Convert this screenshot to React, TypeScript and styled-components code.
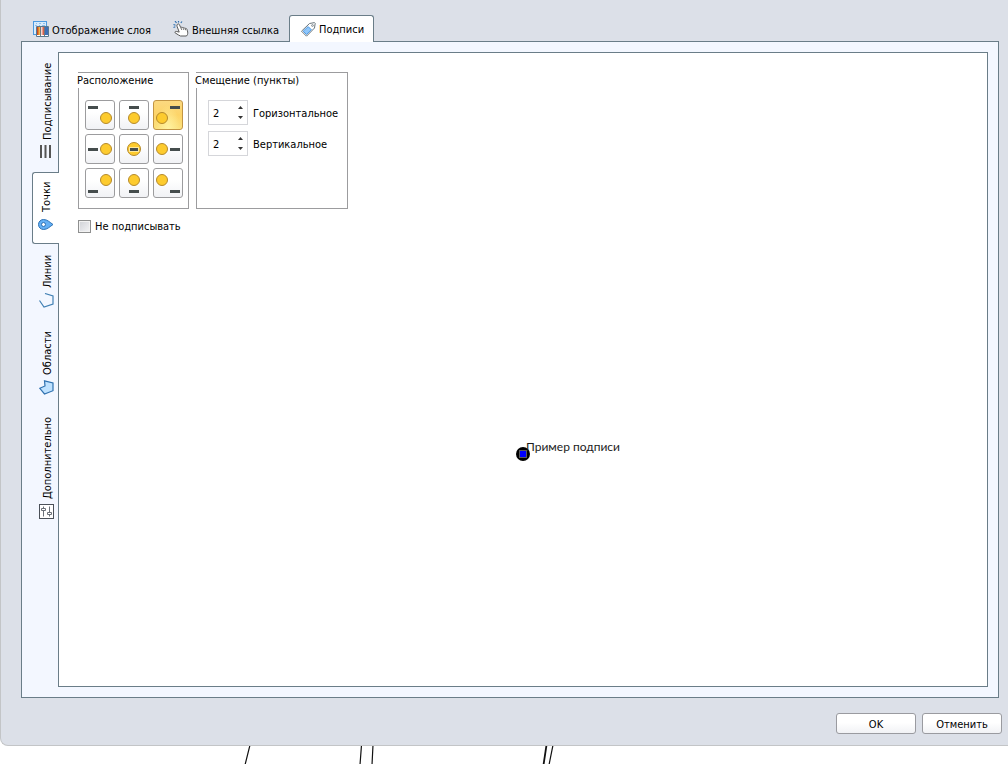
import React, { useState } from "react";
import styled, { createGlobalStyle, css } from "styled-components";

const line = "#6a7d88";
const frame = "#9c9c9e";

const GlobalStyle = createGlobalStyle`
  *, *::before, *::after { box-sizing: border-box; }
  body {
    margin: 0;
    background: #fff;
    color: #000;
    font-family: "DejaVu Sans Condensed", "DejaVu Sans", sans-serif;
    font-size: 11px;
    line-height: 14px;
  }
  button, input { font: inherit; color: inherit; }
  svg { display: block; flex: none; }
`;

const Page = styled.div`
  min-height: 100vh;
  display: flex;
  flex-direction: column;
`;

const Dialog = styled.main`
  flex: 1;
  display: flex;
  flex-direction: column;
  padding: 15px 0 11px;
  background: #dce0e8;
  border: solid #c3c5c7;
  border-width: 0 0 1px 1px;
  border-bottom-left-radius: 8px;
`;

const TopTabs = styled.div`
  display: flex;
  align-items: flex-end;
  padding-left: 20px;
`;

const TopTab = styled.button<{ $active?: boolean; $width: number }>`
  display: flex;
  align-items: center;
  gap: 3px;
  width: ${(p) => p.$width}px;
  height: 24px;
  padding: 0 0 0 12px;
  border: 0;
  background: none;
  white-space: nowrap;
  span { padding-top: 4px; }
  ${(p) =>
    p.$active &&
    css`
      height: 27px;
      margin-bottom: -1px;
      padding: 2px 0 2px 11px;
      border: 1px solid ${line};
      border-bottom: 0;
      border-radius: 3px 3px 0 0;
      background: #fff;
      z-index: 1;
      span { padding-top: 2px; }
    `}
`;

const TabBody = styled.div`
  flex: 1;
  display: flex;
  margin: 0 9px 0 20px;
  padding: 10px 10px 10px 0;
  border: 1px solid ${line};
  background: #f3f7ff;
`;

const SideTabs = styled.div`
  display: flex;
  flex-direction: column;
  align-items: flex-end;
  width: 36px;
`;

const SideTab = styled.button<{ $active?: boolean; $length: number }>`
  display: flex;
  align-items: center;
  gap: 5px;
  writing-mode: vertical-rl;
  transform: rotate(180deg);
  width: 26px;
  height: ${(p) => p.$length}px;
  padding: 12px 5px 0 0;
  border: 0;
  background: none;
  white-space: nowrap;
  ${(p) =>
    p.$active &&
    css`
      width: 27px;
      margin-right: -1px;
      padding: 11px 1px 0 0;
      border: 1px solid ${line};
      border-left: 0;
      border-radius: 0 3px 3px 0;
      background: #fff;
      z-index: 1;
    `}
`;

const Panel = styled.section`
  flex: 1;
  display: flex;
  flex-direction: column;
  border: 1px solid ${line};
  background: #fff;
`;

const Groups = styled.div`
  display: flex;
  gap: 7px;
  padding: 19px 19px 0;
`;

const Group = styled.fieldset<{ $width: number }>`
  width: ${(p) => p.$width}px;
  height: 137px;
  min-width: 0;
  margin: 0;
  padding: 0;
  border: 1px solid ${frame};
`;

const GroupTitle = styled.legend`
  float: left;
  margin-left: -2px;
  padding: 1px 4px 0 0;
  background: #fff;
  white-space: nowrap;
`;

const PlacementGrid = styled.div`
  clear: both;
  display: grid;
  grid-template-columns: repeat(3, 30px);
  gap: 4px;
  padding: 12px 6px 0;
`;

const PlacementButton = styled.button`
  height: 30px;
  padding: 0;
  border: 1px solid ${frame};
  border-radius: 3px;
  background: linear-gradient(#fff 40%, #f1f2f5);
  &[aria-pressed="true"] {
    border-color: #c29544;
    background: radial-gradient(ellipse at 50% 100%, #fff3a0, transparent 60%),
      linear-gradient(#fbd980, #fdd468 50%, #fbe27f);
  }
`;

const Offsets = styled.div`
  clear: both;
  display: flex;
  flex-direction: column;
  gap: 6px;
  padding: 12px 0 0 11px;
`;

const Field = styled.div`
  display: flex;
  align-items: center;
  gap: 5px;
  label { padding-top: 2px; }
`;

const Spin = styled.div`
  display: flex;
  width: 40px;
  height: 25px;
  border: 1px solid #d5d6da;
  background: #fff;
`;

const SpinInput = styled.input`
  flex: 1;
  min-width: 0;
  padding: 2px 0 0 4px;
  border: 0;
  background: none;
  outline: none;
`;

const SpinArrows = styled.div`
  display: flex;
  flex-direction: column;
  justify-content: center;
  width: 14px;
`;

const Arrow = styled.button`
  display: grid;
  place-items: center;
  height: 10px;
  padding: 0;
  border: 0;
  background: none;
`;

const CheckRow = styled.label`
  display: flex;
  align-self: flex-start;
  align-items: center;
  gap: 4px;
  margin: 9px 19px 0;
  span { padding-top: 2px; }
`;

const CheckBox = styled.input`
  appearance: none;
  width: 13px;
  height: 13px;
  margin: 0;
  border: 1px solid #8e8f8f;
  background: linear-gradient(135deg, #cfd1d6, #f4f4f6);
  box-shadow: inset 0 0 0 1px #f2f2f2;
  &:checked { background: #4b6d9c; }
`;

const Preview = styled.div`
  flex: 1;
  display: grid;
  place-items: center;
  padding-bottom: 12px;
`;

const Sample = styled.div`
  position: relative;
`;

const SampleLabel = styled.span`
  position: absolute;
  left: 10px;
  bottom: 6px;
  color: #1c1c1c;
  font: 12px/16px Lato, "Noto Sans", sans-serif;
  white-space: nowrap;
`;

const Footer = styled.footer`
  display: flex;
  justify-content: flex-end;
  gap: 6px;
  padding: 15px 6px 0;
`;

const PushButton = styled.button`
  width: 80px;
  height: 21px;
  padding: 2px 0 0;
  border: 1px solid #9a9ba0;
  border-radius: 3px;
  background: linear-gradient(#fff 45%, #f1f2f5);
`;

const Backdrop = styled.div`
  height: 18px;
  overflow: hidden;
`;

const LayerIcon = () => (
  <svg width="16" height="16" viewBox="0 0 16 16">
    <rect x=".5" y=".5" width="13" height="13" fill="#d7ebfb" stroke="#4c9ae0" />
    <path d="M3 2.500h1M6 2.500h2M10 2.500h2M2 4.500h2M6 4.500h1M9 4.500h3" stroke="#8fbdea" />
    <path d="M3.500 15.500v-10h12v10z" fill="#fff" stroke="#59788f" />
    <rect x="4" y="6" width="3" height="8" fill="url(#warm)" />
    <rect x="8" y="6" width="3" height="8" fill="url(#hot)" />
    <rect x="12" y="6" width="3" height="8" fill="#3c6fb8" />
    <path d="M7.500 6v9M11.500 6v9" stroke="#6d7880" />
    <defs>
      <linearGradient id="warm"><stop stopColor="#c03018" /><stop offset="1" stopColor="#ffd34a" /></linearGradient>
      <linearGradient id="hot"><stop stopColor="#fff0e8" /><stop offset="1" stopColor="#d2452b" /></linearGradient>
    </defs>
  </svg>
);

const HandIcon = () => (
  <svg width="16" height="16" viewBox="0 0 16 16" fill="none">
    <path d="M0.500 3.500l2 .8M2 0l1.500 2M5.500 0v1.500M9 .5L7.800 2M0.500 6.500l1.800-.8" stroke="#2f6fae" strokeWidth="1.200" />
    <path d="M4.500 3.200c.8-.6 1.700-.2 2 .6l1.300 3c.5-.8 1.800-.8 2.200.2.700-.6 1.700-.3 2 .5.800-.4 1.800 0 2 .9.700 1.900 1 3.600.5 5.100l-1 1.500H7.500L5.500 14l-3.400-2.200c-.6-.7.200-1.700 1.200-1.400l2.900.7L4 5.200c-.3-.8-.1-1.600.5-2z" fill="#fff" stroke="#5a5a5a" />
    <path d="M8 7l.8 2M10.200 7.200l.7 1.800M12.200 7.700l.6 1.600" stroke="#777" />
  </svg>
);

const TagIcon = () => (
  <svg width="15" height="15" viewBox="0 0 15 15">
    <path d="M8.500 1.500l5-.9.700.7-.7 4.700-8 8.200-5-5z" fill="#fff" stroke="#69757c" strokeLinejoin="round" />
    <path d="M7.200 4.600l3.200 3.200-4.900 4.700-3.300-3.300z" fill="#8fc7fb" stroke="#4e9ae6" />
    <circle cx="11.500" cy="3.500" r=".9" fill="#fff" stroke="#69757c" strokeWidth=".8" />
  </svg>
);

/* The side tabs are turned by 180 degrees, so their icons are turned back. */
const SideSvg = styled.svg.attrs({ width: 15, height: 15, viewBox: "0 0 15 15" })`
  margin-left: 2px;
  transform: rotate(180deg);
`;

const LinesIcon = () => (
  <SideSvg>
    <path d="M2 0v13M6.500 0v13M11 0v13" stroke="#555" strokeWidth="2" />
  </SideSvg>
);

const PinIcon = () => (
  <SideSvg>
    <path d="M15 7.500C12 9.500 9.500 12.500 5.500 12.500a5 5 0 010-10c4 0 6.500 3 9.500 5z" fill="#64b0f5" stroke="#2c71b4" />
    <circle cx="5.500" cy="7.500" r="2" fill="#fff" stroke="#2c71b4" />
  </SideSvg>
);

const PolylineIcon = () => (
  <SideSvg fill="none">
    <path d="M6 .5l8 2.500v8l-9 3L.5 7.500" stroke="#4180b4" strokeWidth="1.200" />
  </SideSvg>
);

const PolygonIcon = () => (
  <SideSvg>
    <path d="M5.500 .8l8.500 2.200v7.700L5.500 14 .8 8.300l5.200-2.300z" fill="#bfe2ff" stroke="#2f72b0" strokeWidth="1.200" />
  </SideSvg>
);

const SlidersIcon = () => (
  <SideSvg fill="none" stroke="#6a7078">
    <rect x=".5" y=".5" width="14" height="14" fill="#fff" stroke="#4a5058" />
    <path d="M4.500 2.500v2M4.500 6.500v6M10.500 2.500v6M10.500 10.500v2" />
    <path d="M2.500 4.500h4v2h-4zM8.500 8.500h4v2h-4z" />
  </SideSvg>
);

const PlacementIcon = ({ col, row }: { col: number; row: number }) => {
  const barX = [2, 9, 16][col];
  const barY = [5, 13, 21][row];
  const cx = [20, 14, 8][col];
  const cy = [17, 14, 11][row];
  const centred = col === 1 && row === 1;
  return (
    <svg width="28" height="28" viewBox="0 0 28 28">
      <circle cx={cx} cy={cy} r={centred ? 6.5 : 5.5} fill="#fdcb2e" stroke="#b58a2c" />
      {centred && <rect x="9" y="12" width="10" height="5" fill="#ffe99b" />}
      <rect x={centred ? 10 : barX} y={barY} width={centred ? 8 : 10} height="3" fill="#454d4d" />
    </svg>
  );
};

const topTabs = [
  { label: "Отображение слоя", icon: <LayerIcon />, width: 140 },
  { label: "Внешняя ссылка", icon: <HandIcon />, width: 128 },
  { label: "Подписи", icon: <TagIcon />, width: 85 },
];

const sideTabs = [
  { label: "Подписывание", icon: <LinesIcon />, length: 120 },
  { label: "Точки", icon: <PinIcon />, length: 72 },
  { label: "Линии", icon: <PolylineIcon />, length: 76 },
  { label: "Области", icon: <PolygonIcon />, length: 87 },
  { label: "Дополнительно", icon: <SlidersIcon />, length: 124 },
];

const placements = [
  "Слева сверху", "Сверху", "Справа сверху",
  "Слева", "По центру", "Справа",
  "Слева снизу", "Снизу", "Справа снизу",
];

const OffsetField = ({ id, label }: { id: string; label: string }) => {
  const [value, setValue] = useState(2);
  return (
    <Field>
      <Spin>
        <SpinInput id={id} inputMode="numeric" value={value} onChange={(e) => setValue(Number(e.target.value) || 0)} />
        <SpinArrows>
          <Arrow type="button" aria-label="Увеличить" onClick={() => setValue(value + 1)}>
            <svg width="5" height="3" viewBox="0 0 5 3"><path d="M0 3L2.500 0 5 3z" fill="#333" /></svg>
          </Arrow>
          <Arrow type="button" aria-label="Уменьшить" onClick={() => setValue(value - 1)}>
            <svg width="5" height="3" viewBox="0 0 5 3"><path d="M0 0L2.500 3 5 0z" fill="#333" /></svg>
          </Arrow>
        </SpinArrows>
      </Spin>
      <label htmlFor={id}>{label}</label>
    </Field>
  );
};

export default function App() {
  const [topTab, setTopTab] = useState(2);
  const [sideTab, setSideTab] = useState(1);
  const [placement, setPlacement] = useState(2);

  return (
    <Page>
      <GlobalStyle />
      <Dialog>
        <TopTabs role="tablist">
          {topTabs.map((t, i) => (
            <TopTab key={t.label} type="button" role="tab" aria-selected={i === topTab} $active={i === topTab} $width={t.width} onClick={() => setTopTab(i)}>
              {t.icon}
              <span>{t.label}</span>
            </TopTab>
          ))}
        </TopTabs>
        <TabBody>
          <SideTabs role="tablist" aria-orientation="vertical">
            {sideTabs.map((t, i) => (
              <SideTab key={t.label} type="button" role="tab" aria-selected={i === sideTab} $active={i === sideTab} $length={t.length} onClick={() => setSideTab(i)}>
                {t.icon}
                <span>{t.label}</span>
              </SideTab>
            ))}
          </SideTabs>
          <Panel role="tabpanel">
            <Groups>
              <Group $width={111}>
                <GroupTitle>Расположение</GroupTitle>
                <PlacementGrid>
                  {placements.map((name, i) => (
                    <PlacementButton key={name} type="button" aria-label={name} aria-pressed={i === placement} onClick={() => setPlacement(i)}>
                      <PlacementIcon col={i % 3} row={Math.floor(i / 3)} />
                    </PlacementButton>
                  ))}
                </PlacementGrid>
              </Group>
              <Group $width={152}>
                <GroupTitle>Смещение (пункты)</GroupTitle>
                <Offsets>
                  <OffsetField id="offset-x" label="Горизонтальное" />
                  <OffsetField id="offset-y" label="Вертикальное" />
                </Offsets>
              </Group>
            </Groups>
            <CheckRow>
              <CheckBox type="checkbox" />
              <span>Не подписывать</span>
            </CheckRow>
            <Preview>
              <Sample>
                <svg width="14" height="14" viewBox="0 0 14 14">
                  <circle cx="7" cy="7" r="7" fill="#000" />
                  <rect x="3.500" y="3.500" width="7" height="7" fill="#0000ff" stroke="#5a5a5a" />
                </svg>
                <SampleLabel>Пример подписи</SampleLabel>
              </Sample>
            </Preview>
          </Panel>
        </TabBody>
        <Footer>
          <PushButton type="button">OK</PushButton>
          <PushButton type="button">Отменить</PushButton>
        </Footer>
      </Dialog>
      <Backdrop>
        <svg width="600" height="18" viewBox="0 0 600 18" fill="none" stroke="#111" strokeWidth="1.200">
          <path d="M250 -1L245 19M361.500 -1L360 19M373 -1L372 19M553 -1L549 19" />
          <path d="M546.500 -1L543.500 19" strokeWidth="1.800" />
        </svg>
      </Backdrop>
    </Page>
  );
}
